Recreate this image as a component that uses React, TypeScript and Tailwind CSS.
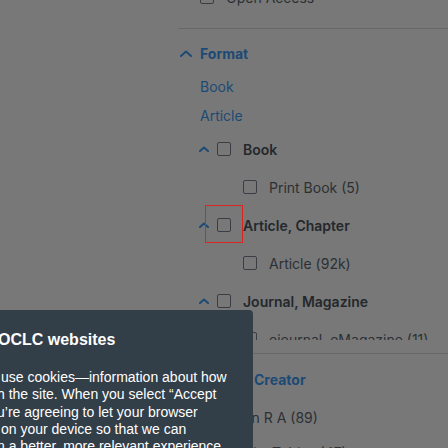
import React from 'react';

function Chevron({ size = 10 }: { size?: number }) {
  const h = Math.round(size * 0.6);
  return (
    <svg width={size} height={h} viewBox={`0 0 ${size} ${h}`} className="shrink-0">
      <polyline
        points={`1,${h - 1} ${size / 2},1.5 ${size - 1},${h - 1}`}
        fill="none"
        stroke="#1c4a75"
        strokeWidth="2"
        strokeLinecap="round"
        strokeLinejoin="round"
      />
    </svg>
  );
}

function Box() {
  return <span className="block w-[14px] h-[14px] shrink-0 rounded-[2px] border-[1.5px] border-[#3a3e44]" />;
}

function GroupRow({ label, focus }: { label: string; focus?: boolean }) {
  return (
    <div className="relative flex items-center h-[38px] pl-[21px]">
      <Chevron size={10} />
      <span className="ml-[8px]"><Box /></span>
      <span className="ml-[12px] font-semibold text-[#24282c]">{label}</span>
      {focus && <span className="absolute left-[27px] top-[-1px] w-[38px] h-[38px] border border-[#d8261f]" />}
    </div>
  );
}

function SubRow({ label }: { label: string }) {
  return (
    <div className="flex items-center h-[38px] pl-[65px]">
      <Box />
      <span className="ml-[12px] text-[#2c3034]">{label}</span>
    </div>
  );
}

function CheckRow({ label }: { label: string }) {
  return (
    <div className="flex items-center h-[38px] pl-[22px]">
      <Box />
      <span className="ml-[12px] text-[#2c3034]">{label}</span>
    </div>
  );
}

function Heading({ children }: { children: React.ReactNode }) {
  return (
    <div className="flex items-center h-[38px] pl-[2px]">
      <Chevron size={12} />
      <span className="ml-[8px] flex font-bold text-[#1c4a75]">{children}</span>
    </div>
  );
}

export default function App() {
  return (
    <div className="relative w-[448px] h-[448px] overflow-hidden bg-[#787878] font-['Inter',sans-serif] text-[14px]">
      <div className="ml-[178px] -mt-[22px]">
        <CheckRow label="Open Access" />
        <div className="mt-[12px] border-t border-[#686868]" />
        <div className="mt-[5px]">
          <Heading>Format</Heading>
        </div>
        <div className="h-[268px] overflow-hidden">
          <div className="flex items-center h-[29px] pl-[22px] text-[#1c4a75]">Book</div>
          <div className="flex items-center h-[29px] pl-[22px] text-[#1c4a75]">Article</div>
          <GroupRow label="Book" />
          <SubRow label="Print Book (5)" />
          <GroupRow label="Article, Chapter" focus />
          <SubRow label="Article (92k)" />
          <GroupRow label="Journal, Magazine" />
          <SubRow label="ejournal, eMagazine (11)" />
        </div>
        <div className="mt-[13px] border-t border-[#686868]" />
        <div className="mt-[6px]">
          <Heading>
            <span className="w-[54px] shrink-0 overflow-hidden whitespace-nowrap">Author</span>
            <span>Creator</span>
          </Heading>
        </div>
        <CheckRow label="Khan R A (89)" />
        <div className="-mt-[3px]">
          <CheckRow label="Lewis, Tobias (47)" />
        </div>
      </div>

      <div className="absolute left-0 top-[310px] w-[253px] h-[160px] rounded-tr-[4px] bg-[#323e48] text-white font-['Liberation_Sans',Arial,sans-serif] overflow-hidden">
        <div className="pt-[20px] -ml-[2px] whitespace-nowrap text-[16px] leading-[20px] font-bold">OCLC websites</div>
        <div className="mt-[19px] text-[14px] leading-[17.25px] whitespace-nowrap">
          <div className="ml-[1px]">use cookies—information about how</div>
          <div className="-ml-[3px]">h the site. When you select “Accept</div>
          <div className="-ml-[3px]">u’re agreeing to let your browser</div>
          <div className="ml-[1px]">on your device so that we can</div>
          <div className="-ml-[3px]">n a better, more relevant experience.</div>
        </div>
      </div>
    </div>
  );
}
